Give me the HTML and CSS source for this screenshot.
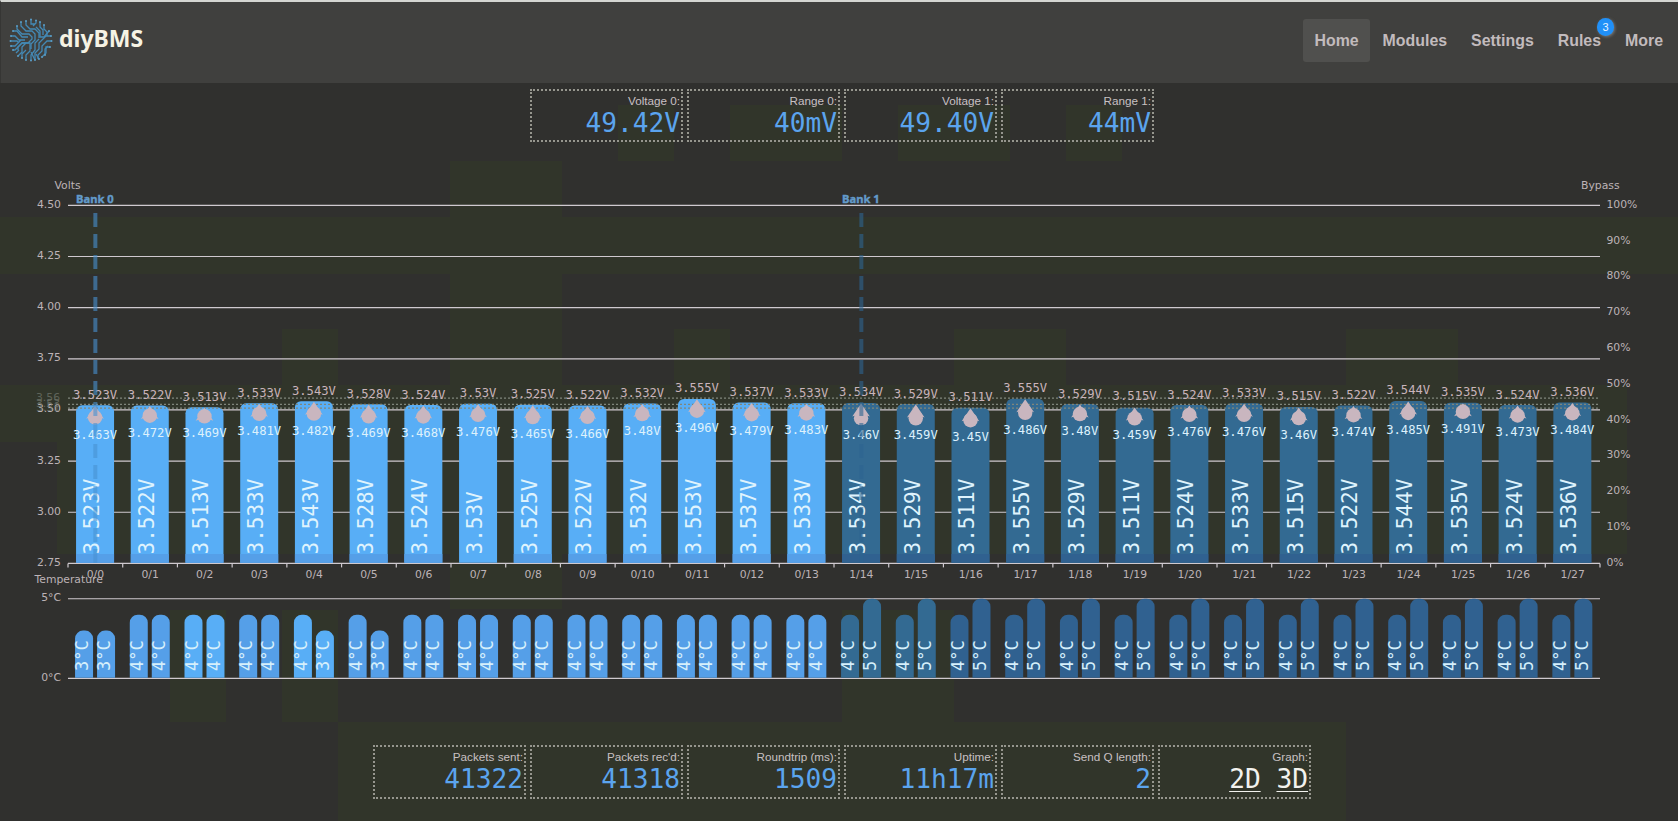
FILE: index.html
```html
<!DOCTYPE html>
<html lang="en">
<head>
  <meta charset="UTF-8">
  <title>diyBMS</title>
  <link rel="stylesheet" href="styles.css">
</head>
<body>
  <!-- tinted blocks behind the page -->
  <svg id="backdrop" width="1678" height="821" aria-hidden="true">
    <rect x="618" y="105" width="56" height="56"/>
    <rect x="730" y="105" width="112" height="56"/>
    <rect x="898" y="105" width="112" height="56"/>
    <rect x="1066" y="105" width="56" height="56"/>
    <rect x="450" y="161" width="112" height="448"/>
    <rect x="0" y="217" width="1678" height="57"/>
    <rect x="282" y="329" width="56" height="56"/>
    <rect x="674" y="329" width="56" height="56"/>
    <rect x="954" y="329" width="112" height="56"/>
    <rect x="1346" y="329" width="112" height="56"/>
    <rect x="0" y="385" width="1627" height="57"/>
    <rect x="57" y="442" width="1570" height="112"/>
    <rect x="170" y="610" width="56" height="112"/>
    <rect x="282" y="610" width="56" height="112"/>
    <rect x="842" y="610" width="112" height="112"/>
    <rect x="338" y="722" width="1008" height="99"/>
  </svg>

  <header>
    <div class="logo">
      <svg width="44" height="44" viewBox="0 0 44 44">
        <g class="trace">
          <path d="M17 3v4l4 4h5l4 4v5M22 1v5h4M27 2v3l-3 3M31 4v5l3 3v5M35 7v4l3 3v4"/>
          <path d="M12 4v4l5 5h6l3 3v6l-4 4v5M8 8v3l5 5h7l3 3v2l-4 4h-6l-4 4v3"/>
          <path d="M4 13h4l5 6h6M2 18h4l4 4h6M1 23h7l2 2M2 28h4l6-6M4 32h2l7-7h4"/>
          <path d="M42 18h-5l-7 7v6l-4 4v7M43 23h-5l-5 5v5l-4 4v4M41 29h-4v6l-4 4"/>
          <path d="M40 13l-5 6h-4v-6l-4-4M9 38l4-4v-5l4-4h4v8l-4 4v5M13 40v-4l4-4"/>
          <path d="M22 43v-6l4-5v-7l4-4M26 42l-4-8M36 37v-6l3-3M30 41l-3-5M7 35l3-3"/>
        </g>
        <g class="pad">
          <circle cx="17" cy="3" r="1"/><circle cx="22" cy="1.5" r="1"/><circle cx="27" cy="2.5" r="1"/>
          <circle cx="31" cy="4" r="1"/><circle cx="35" cy="7" r="1"/><circle cx="12" cy="4" r="1"/>
          <circle cx="8" cy="8" r="1"/><circle cx="4" cy="13" r="1"/><circle cx="2" cy="18" r="1"/>
          <circle cx="1.5" cy="23" r="1"/><circle cx="2" cy="28" r="1"/><circle cx="4" cy="32" r="1"/>
          <circle cx="42" cy="18" r="1"/><circle cx="42.5" cy="23" r="1"/><circle cx="41" cy="29" r="1"/>
          <circle cx="40" cy="13" r="1"/><circle cx="9" cy="38" r="1"/><circle cx="13" cy="40" r="1"/>
          <circle cx="17" cy="42" r="1"/><circle cx="22" cy="42.5" r="1"/><circle cx="26" cy="42" r="1"/>
          <circle cx="30" cy="41" r="1"/><circle cx="33" cy="39" r="1"/><circle cx="36" cy="37" r="1"/>
        </g>
      </svg>
      <span>diyBMS</span>
    </div>
    <nav>
      <a class="active">Home</a>
      <a>Modules</a>
      <a>Settings</a>
      <a>Rules<span class="badge">3</span></a>
      <a>More</a>
    </nav>
  </header>

  <section class="stats">
    <div class="stat"><span class="t">Voltage 0:</span><span class="v">49.42V</span></div>
    <div class="stat"><span class="t">Range 0:</span><span class="v">40mV</span></div>
    <div class="stat"><span class="t">Voltage 1:</span><span class="v">49.40V</span></div>
    <div class="stat"><span class="t">Range 1:</span><span class="v">44mV</span></div>
  </section>

  <svg id="graph" width="1678" height="603" viewBox="0 142 1678 603"></svg>

  <section class="stats">
    <div class="stat"><span class="t">Packets sent:</span><span class="v">41322</span></div>
    <div class="stat"><span class="t">Packets rec'd:</span><span class="v">41318</span></div>
    <div class="stat"><span class="t">Roundtrip (ms):</span><span class="v">1509</span></div>
    <div class="stat"><span class="t">Uptime:</span><span class="v">11h17m</span></div>
    <div class="stat"><span class="t">Send Q length:</span><span class="v">2</span></div>
    <div class="stat"><span class="t">Graph:</span><span class="v"><a>2D</a> <a>3D</a></span></div>
  </section>

  <script src="graph.js"></script>
</body>
</html>
```
FILE: styles.css
```css
body {
  margin: 0;
  height: 821px;
  overflow: hidden;
  background: #30302e;
  color: #c8c0c2;
  font-family: "Liberation Sans", Arial, sans-serif;
}
#backdrop {
  position: absolute;
  top: 0;
  left: 0;
  z-index: -1;
  fill: #31352a;
}
header {
  box-sizing: border-box;
  height: 83px;
  display: flex;
  justify-content: space-between;
  align-items: flex-start;
  border-top: 2px solid #d4d6d2;
  border-left: 1px solid #363634;
  background: #40403e;
}
.logo {
  display: flex;
  margin: 16px 0 0 8px;
}
.logo span {
  margin: 3px 0 0 6px;
  font: bold 23px/34px "Noto Sans", "Open Sans", sans-serif;
  color: #f6f3e4;
}
.trace {
  fill: none;
  stroke: #4389b5;
  stroke-width: 1.3;
}
.pad {
  fill: #5a9cc4;
}
nav {
  display: flex;
  gap: 2px;
  margin: 17px 4px 0 0;
}
nav a {
  position: relative;
  padding: 0 11px;
  border-radius: 3px;
  font-weight: bold;
  font-size: 15.9px;
  line-height: 44px;
  color: #c2bbbd;
}
nav a.active {
  height: 43px;
  background: #50504e;
}
.badge {
  position: absolute;
  top: -1px;
  right: 5px;
  width: 17px;
  height: 18px;
  margin-right: -7px;
  border-radius: 9px;
  background: #2090f8;
  box-shadow: 1px 1px 3px #777;
  color: #e8f4ff;
  font-weight: normal;
  font-size: 11px;
  line-height: 19px;
  text-align: center;
}
.stats {
  display: flex;
  justify-content: center;
  gap: 4px;
  padding: 0 0 0 6px;
}
header + .stats {
  padding-top: 6px;
}
.stat {
  box-sizing: border-box;
  width: 153px;
  height: 54px;
  padding: 1px 1px 0 0;
  border: 2px dotted #96968e;
  text-align: right;
}
header + .stats .stat {
  height: 53px;
}
.stat .t {
  display: block;
  font-size: 11.7px;
  line-height: 17px;
}
.stat .v {
  display: block;
  font: 26.2px/28px "DejaVu Sans Mono", monospace;
  color: #5ba4ee;
}
.stat .v a {
  color: #f2f2ee;
  text-decoration: underline;
  text-decoration-thickness: 1px;
  text-underline-offset: 3px;
}
#graph {
  display: block;
}

/* chart */
.axis {
  font: 10.8px "DejaVu Sans", sans-serif;
  fill: #bdb3b7;
}
.end {
  text-anchor: end;
}
.mid {
  text-anchor: middle;
}
.grid {
  stroke: #cfc9cf;
  stroke-width: 1.2;
}
.limit {
  stroke: #80867c;
  stroke-width: 1.2;
  stroke-dasharray: 2 2;
}
.limit-name {
  font: 10.8px "DejaVu Sans", sans-serif;
  fill: #72776d;
  opacity: .7;
}
.bank-name {
  font: bold 11.2px "Noto Sans", sans-serif;
  fill: #639bca;
  stroke: #639bca;
  stroke-width: .4;
}
.bank {
  stroke-width: 4;
  stroke-dasharray: 14 7;
}
.bank0 { stroke: rgba(72, 145, 210, .6); }
.bank1 { stroke: rgba(45, 100, 145, .6); }
.cell0 { fill: #58aef6; }
.cell1 { fill: #336a92; }
.cell0-dark { fill: #559fe8; }
.cell1-dark { fill: #306190; }
.mark {
  fill: #c9b6bf;
}
.reading {
  font: 12.2px "DejaVu Sans Mono", monospace;
  text-anchor: middle;
  fill: #c9b4bb;
}
.low {
  fill: #ddf1fc;
}
.side {
  font: 21px "DejaVu Sans Mono", monospace;
  fill: #dff3fd;
}
.side-temp {
  font: 17px "DejaVu Sans Mono", monospace;
  fill: #d5effb;
}
```
FILE: graph.js
```js
// module data: [voltage, max, min]
const cells = [
  [3.523, 3.523, 3.463], [3.522, 3.522, 3.472], [3.513, 3.513, 3.469], [3.533, 3.533, 3.481],
  [3.543, 3.543, 3.482], [3.528, 3.528, 3.469], [3.524, 3.524, 3.468], [3.53, 3.53, 3.476],
  [3.525, 3.525, 3.465], [3.522, 3.522, 3.466], [3.532, 3.532, 3.48], [3.553, 3.555, 3.496],
  [3.537, 3.537, 3.479], [3.533, 3.533, 3.483], [3.534, 3.534, 3.46], [3.529, 3.529, 3.459],
  [3.511, 3.511, 3.45], [3.555, 3.555, 3.486], [3.529, 3.529, 3.48], [3.511, 3.515, 3.459],
  [3.524, 3.524, 3.476], [3.533, 3.533, 3.476], [3.515, 3.515, 3.46], [3.522, 3.522, 3.474],
  [3.544, 3.544, 3.485], [3.535, 3.535, 3.491], [3.524, 3.524, 3.473], [3.536, 3.536, 3.484]
];
// internal / external temperature
const temps = cells.map((c, i) => i === 0 ? [3, 3] : i === 4 || i === 5 ? [4, 3] : i < 14 ? [4, 4] : [4, 5]);

const LEFT = 68, RIGHT = 1600, BASE = 563.4, TBASE = 678.4;
const step = (RIGHT - LEFT) / cells.length;
const vy = v => BASE - (v - 2.75) * 204.6;
const ty = t => TBASE - t * 15.93;
const midX = i => LEFT + step * (i + .5);
let out = "";

function text(x, y, cls, s) {
  out += `<text x="${x}" y="${y}" class="${cls}">${s}</text>`;
}
function line(x1, y1, x2, y2, cls) {
  out += `<line x1="${x1}" y1="${y1}" x2="${x2}" y2="${y2}" class="${cls}"/>`;
}
function bar(x, y, w, bottom, r, cls) {
  out += `<path class="${cls}" d="M${x} ${bottom}V${y + r}a${r} ${r} 0 0 1 ${r} ${-r}h${w - 2 * r}a${r} ${r} 0 0 1 ${r} ${r}V${bottom}z"/>`;
}
function upText(x, y, cls, s) {
  out += `<text transform="translate(${x} ${y}) rotate(-90)" class="${cls}">${s}</text>`;
}

// axes
text(54.5, 189, "axis", "Volts");
text(1581, 189, "axis", "Bypass");
for (let v = 2.75; v <= 4.5; v += .25) {
  line(LEFT, vy(v), RIGHT, vy(v), "grid");
  text(61, vy(v) + 2.5, "axis end", v.toFixed(2));
}
for (let p = 0; p <= 100; p += 10) {
  text(1606.5, BASE + 2.5 - p * 3.581, "axis", p + "%");
}
for (let i = 0; i <= cells.length; i++) {
  line(LEFT + step * i, BASE, LEFT + step * i, BASE + 4, "grid");
}
text(34.5, 582.5, "axis", "Temperature");
[5, 0].forEach(t => {
  line(LEFT, ty(t), RIGHT, ty(t), "grid");
  text(61, ty(t) + 2.5, "axis end", t + "°C");
});

// bars
cells.forEach((c, i) => {
  const bank = i < 14 ? 0 : 1, x = midX(i);
  bar(x - 19.3, vy(c[0]), 38, BASE - .6, 6, "cell" + bank);
  if (i !== 7) {
    out += `<rect x="${x - 19.3}" y="554" width="38" height="8.8" class="cell${bank}-dark"/>`;
  }
  text(x, 578, "axis mid", bank + "/" + i);
  const lit = [2, 4, 14, 15].includes(i);
  temps[i].forEach((t, n) => {
    const tx = x - 20.3 + n * 22;
    bar(tx, ty(t), 18, TBASE - .6, 8, "cell" + bank + (lit ? "" : "-dark"));
    upText(tx + 13.2, 671, "side-temp", t + "°C");
  });
});

// limits
[3.558, 3.527, 3.509].forEach(v => line(LEFT, vy(v), RIGHT, vy(v), "limit"));
text(36, 401, "limit-name", "3.56");
text(36, 407, "limit-name", "3.53");
text(36, 411, "limit-name", "3.51");

// min / max markers and readings
cells.forEach((c, i) => {
  const x = midX(i) - .3, hi = vy(c[1]), lo = vy(c[2]);
  out += `<path class="mark" d="M${x} ${hi + .5}l8.8 13l-8.8 -3l-8.8 3z"/>`;
  out += `<circle class="mark" cx="${x}" cy="${lo}" r="7.2"/>`;
  text(x, hi - 6.5, "reading", c[1] + "V");
  text(x, lo + 21, "reading low", c[2] + "V");
  upText(x + 4, 554.5, "side", c[0] + "V");
});

// bank markers
[0, 14].forEach((i, b) => {
  line(midX(i), 213, midX(i), BASE, "bank bank" + b);
  text(midX(i) - .5, 202.5, "bank-name mid", "Bank " + b);
});

document.getElementById("graph").innerHTML = out;
```
